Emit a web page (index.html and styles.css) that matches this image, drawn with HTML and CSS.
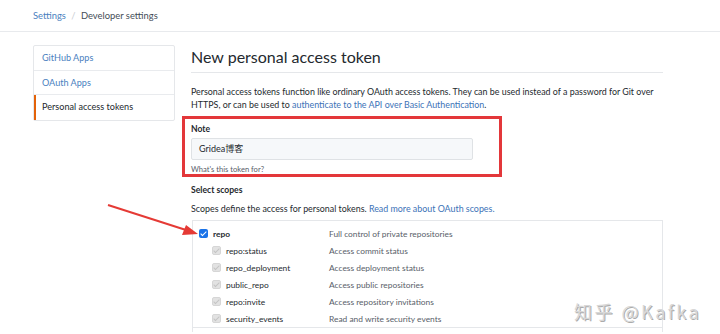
FILE: index.html
```html
<!DOCTYPE html>
<html>
<head>
  <meta charset="UTF-8">
  <title>Developer settings</title>
  <link rel="stylesheet" href="styles.css">
</head>
<body>
  <div class="header">
    <div class="crumbs">
      <a class="crumb-link">Settings</a>
      <span class="sep">/</span>
      <span class="crumb-cur">Developer settings</span>
    </div>
  </div>

  <div class="container">
    <div class="sidebar">
      <a class="side-item">GitHub Apps</a>
      <a class="side-item">OAuth Apps</a>
      <a class="side-item selected">Personal access tokens</a>
    </div>

    <div class="main">
      <h2 class="title">New personal access token</h2>
      <p class="lead">Personal access tokens function like ordinary OAuth access tokens. They can be used instead of a password for Git over HTTPS, or can be used to <a class="link">authenticate to the API over Basic Authentication</a>.</p>

      <div class="note-box">
        <label class="label">Note</label>
        <div class="input">Gridea博客</div>
        <p class="hint">What's this token for?</p>
      </div>

      <h3 class="label scopes-title">Select scopes</h3>
      <p class="scopes-desc">Scopes define the access for personal tokens. <a class="link">Read more about OAuth scopes.</a></p>

      <div class="scopes">
        <div class="group">
          <div class="row">
            <span class="name parent"><span class="check on"></span>repo</span>
            <span class="desc">Full control of private repositories</span>
          </div>
          <div class="row">
            <span class="name child"><span class="check off"></span>repo:status</span>
            <span class="desc">Access commit status</span>
          </div>
          <div class="row">
            <span class="name child"><span class="check off"></span>repo_deployment</span>
            <span class="desc">Access deployment status</span>
          </div>
          <div class="row">
            <span class="name child"><span class="check off"></span>public_repo</span>
            <span class="desc">Access public repositories</span>
          </div>
          <div class="row">
            <span class="name child"><span class="check off"></span>repo:invite</span>
            <span class="desc">Access repository invitations</span>
          </div>
          <div class="row">
            <span class="name child"><span class="check off"></span>security_events</span>
            <span class="desc">Read and write security events</span>
          </div>
        </div>
        <div class="group next"></div>
      </div>
    </div>
  </div>

  <svg class="arrow" width="100" height="40" viewBox="0 0 100 40">
    <line x1="2" y1="2" x2="80" y2="27" stroke="#e53a35" stroke-width="2"/>
    <polygon points="92,31 76,32 80,22" fill="#e53a35"/>
  </svg>

  <div class="watermark">知乎 @Kafka</div>
</body>
</html>
```

FILE: styles.css
```css
* {
  margin: 0;
  padding: 0;
  box-sizing: border-box;
}
body {
  font-family: Lato, "Noto Sans CJK SC", sans-serif;
  font-size: 8.9px;
  color: #24292e;
  background: #fff;
  position: relative;
  height: 334px;
  overflow: hidden;
}
a {
  text-decoration: none;
}
.header {
  height: 32px;
  border-bottom: 1px solid #e8eaed;
  padding: 8px 0 0 33px;
}
.crumbs {
  font-size: 9.4px;
  line-height: 16px;
}
.crumb-link {
  color: #4a7fc0;
}
.sep {
  color: #c9cdd2;
  margin: 0 3px;
}
.crumb-cur {
  color: #444d56;
}
.container {
  display: flex;
  gap: 16px;
  width: 630px;
  margin: 13px 0 0 33px;
}
.sidebar {
  width: 142px;
  flex: none;
  align-self: flex-start;
  border: 1px solid #e5e7ea;
  border-radius: 2px;
  display: flex;
  flex-direction: column;
}
.side-item {
  height: 24.5px;
  line-height: 23.5px;
  padding-left: 8px;
  color: #4a7fc0;
  border-bottom: 1px solid #e9ebee;
  font-size: 9.1px;
}
.side-item:last-child {
  border-bottom: none;
}
.side-item.selected {
  color: #24292e;
  border-left: 2px solid #e36209;
  padding-left: 6px;
}
.main {
  flex: 1;
}
.title {
  font-weight: 400;
  font-size: 16px;
  line-height: 24px;
  padding-bottom: 3px;
  border-bottom: 1px solid #e5e7ea;
}
.lead {
  margin-top: 12px;
  line-height: 13px;
}
.link {
  color: #3c72b7;
}
.note-box {
  margin: 5px 0 0 -9px;
  width: 320px;
  height: 61px;
  border: 3px solid #e3373a;
  padding: 3px 0 0 6px;
}
.label {
  display: block;
  font-weight: 700;
  font-size: 8.6px;
  line-height: 14px;
}
.input {
  margin-top: 2px;
  width: 282px;
  height: 22px;
  border: 1px solid #dfe2e5;
  border-radius: 2px;
  background: #f6f8fa;
  padding-left: 7px;
  line-height: 20px;
  font-size: 9px;
}
.hint {
  font-size: 7.6px;
  color: #586069;
  line-height: 12px;
  margin-top: 3px;
}
.scopes-title {
  margin-top: 6px;
}
.scopes-desc {
  margin-top: 5px;
  line-height: 13px;
}
.scopes {
  margin: 5px 0 0 1px;
  border: 1px solid #e5e7ea;
  border-bottom: none;
  font-size: 8.4px;
}
.group {
  height: 107px;
  padding: 4px 0 0 5px;
  border-bottom: 1px solid #e5e7ea;
}
.group.next {
  height: 4px;
  border-bottom: none;
}
.row {
  display: flex;
  height: 17px;
  align-items: center;
}
.name {
  display: flex;
  align-items: center;
  width: 131px;
  flex: none;
}
.name.parent {
  font-weight: 700;
  padding-left: 1px;
}
.name.child {
  padding-left: 14px;
}
.check {
  width: 9px;
  height: 9px;
  border-radius: 2px;
  margin-right: 5px;
  flex: none;
  position: relative;
}
.check::after {
  content: "";
  position: absolute;
  left: 3px;
  top: 1px;
  width: 2px;
  height: 5px;
  border: solid #fff;
  border-width: 0 1.5px 1.5px 0;
  transform: rotate(45deg);
}
.check.on {
  background: #1a73e8;
}
.check.off {
  background: #e2e2e2;
  border: 1px solid #d6d6d6;
}
.check.off::after {
  left: 2px;
  top: 0;
  border-color: #c4c4c4;
}
.desc {
  color: #586069;
}
.arrow {
  position: absolute;
  left: 106px;
  top: 203px;
}
.watermark {
  position: absolute;
  left: 574px;
  top: 298px;
  font-size: 18px;
  font-family: "Noto Sans CJK SC", sans-serif;
  color: #d8d8d8;
  text-shadow: 1px 1px 0 #ababab;
  letter-spacing: 2.5px;
}
```
